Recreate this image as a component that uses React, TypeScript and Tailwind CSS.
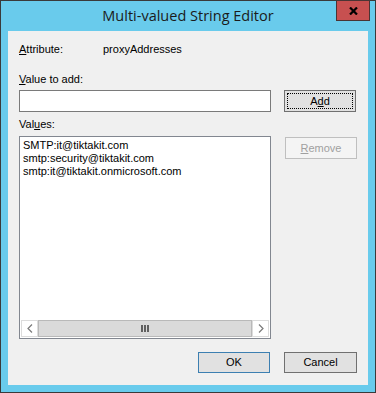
import React from 'react';

const sans = { fontFamily: '"Liberation Sans", Arial, sans-serif' };

function U({ children }: { children: React.ReactNode }) {
  return <span className="underline underline-offset-[1px]">{children}</span>;
}

function Chevron({ dir }: { dir: 'l' | 'r' }) {
  return (
    <svg width="6" height="9" viewBox="0 0 6 9">
      <path
        d={dir === 'l' ? 'M5 0.5 L1 4.5 L5 8.5' : 'M1 0.5 L5 4.5 L1 8.5'}
        fill="none"
        stroke="#7a7a7a"
        strokeWidth="1.2"
      />
    </svg>
  );
}

export default function App() {
  const values = [
    'SMTP:it@tiktakit.com',
    'smtp:security@tiktakit.com',
    'smtp:it@tiktakit.onmicrosoft.com',
  ];

  return (
    <div className="flex h-[393px] w-[376px] flex-col border border-[#3a3a3a] bg-[#69cbec]">
      {/* Title bar */}
      <div className="relative flex h-[30px] items-center justify-center">
        <span
          className="text-[14.5px] leading-none text-[#1b1b1b]"
          style={{ fontFamily: '"Open Sans", "Noto Sans", sans-serif' }}
        >
          Multi-valued String Editor
        </span>
        <div className="absolute right-[5px] top-[-1px] flex h-[21px] w-[34px] items-center justify-center border border-[#4a3434] bg-[#c75050]">
          <svg width="9" height="8" viewBox="0 0 9 8">
            <path d="M1 0.5 L8 7.5 M8 0.5 L1 7.5" stroke="#000" strokeWidth="2.2" />
          </svg>
        </div>
      </div>

      {/* Client area */}
      <div
        className="mx-[7px] mb-[7px] flex flex-1 flex-col bg-[#f0f0f0] px-[11px] pt-[12px] text-[11px] leading-[13px] text-black"
        style={sans}
      >
        <div className="flex">
          <span className="w-[84px]">
            <U>A</U>ttribute:
          </span>
          <span>proxyAddresses</span>
        </div>

        <div className="mt-[17px]">
          <U>V</U>alue to add:
        </div>

        <div className="mt-[4px] flex items-start gap-[13px]">
          <div className="h-[22px] w-[252px] border border-[#7a7a7a] bg-white" />
          <div className="flex h-[22px] w-[72px] items-center justify-center border border-[#707070] bg-[#e1e1e1] p-[2px]">
            <div className="flex h-full w-full items-center justify-center border border-dotted border-black">
              A<U>d</U>d
            </div>
          </div>
        </div>

        <div className="mt-[6px]">
          Val<U>u</U>es:
        </div>

        <div className="mt-[5px] flex items-start gap-[14px]">
          <div className="flex h-[203px] w-[252px] flex-col border border-[#828790] bg-white">
            <div className="flex flex-1 flex-col px-[3px] pt-[2px]">
              {values.map((v) => (
                <div key={v} className="leading-[13px]">
                  {v}
                </div>
              ))}
            </div>
            <div className="mb-[1px] flex h-[17px] px-[1px]">
              <div className="flex w-[17px] items-center justify-center border border-[#dcdcdc] bg-white">
                <Chevron dir="l" />
              </div>
              <div className="flex flex-1 items-center justify-center border border-[#b9b9b9] bg-[#dadada]">
                <svg width="8" height="7" viewBox="0 0 8 7">
                  <rect x="0" y="0" width="2" height="7" fill="#606060" />
                  <rect x="3" y="0" width="2" height="7" fill="#606060" />
                  <rect x="6" y="0" width="2" height="7" fill="#606060" />
                </svg>
              </div>
              <div className="flex w-[17px] items-center justify-center border border-[#dcdcdc] bg-white">
                <Chevron dir="r" />
              </div>
            </div>
          </div>
          <div className="mt-[1px] flex h-[22px] w-[72px] items-center justify-center border border-[#bfbfbf] bg-[#f4f4f4] text-[#a0a0a0]">
            <span>
              <U>R</U>emove
            </span>
          </div>
        </div>

        <div className="mt-[13px] flex justify-end gap-[14px]">
          <div className="flex h-[21px] w-[72px] items-center justify-center border border-[#3c7fb1] bg-[#e1e1e1]">
            OK
          </div>
          <div className="flex h-[21px] w-[73px] items-center justify-center border border-[#707070] bg-[#e1e1e1]">
            Cancel
          </div>
        </div>
      </div>
    </div>
  );
}
